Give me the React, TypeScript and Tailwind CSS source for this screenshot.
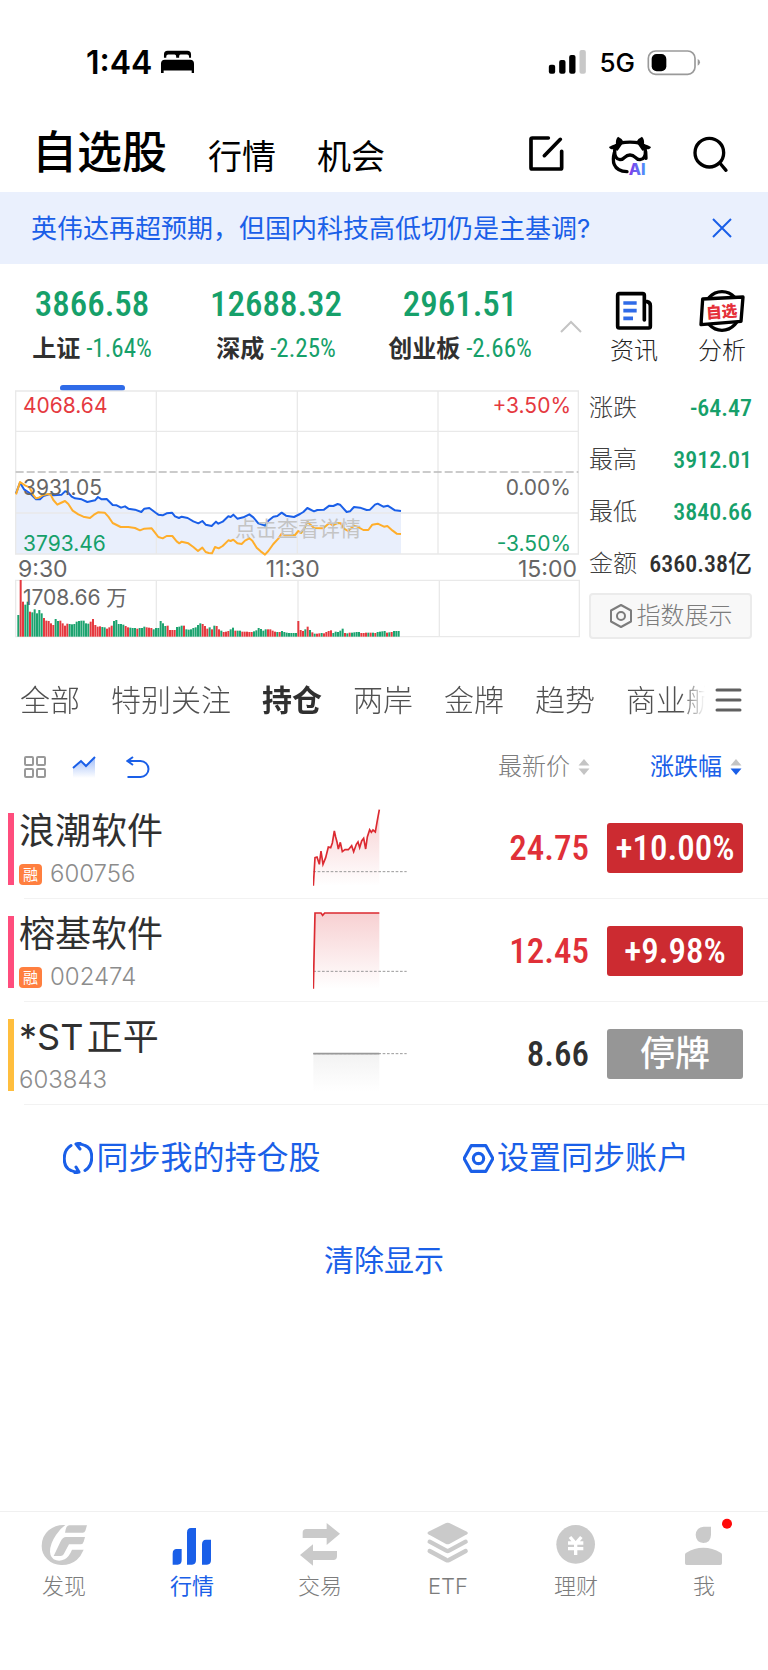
import type { ReactNode } from "react";

const INDEXES = [
  { name: "上证", value: "3866.58", pct: "-1.64%", active: true },
  { name: "深成", value: "12688.32", pct: "-2.25%", active: false },
  { name: "创业板", value: "2961.51", pct: "-2.66%", active: false },
];

const STATS = [
  { label: "涨跌", value: "-64.47", down: true },
  { label: "最高", value: "3912.01", down: true },
  { label: "最低", value: "3840.66", down: true },
  { label: "金额", value: "6360.38亿", down: false },
];

const GROUPS = ["全部", "特别关注", "持仓", "两岸", "金牌", "趋势", "商业航"];

const PRICE_LINE =
  "48,340 60,308 72,328 90,340 108,358 120,358 130,348 150,342 160,346 185,344 195,334 203,336 215,350 225,355 245,358 262,366 285,361 294,351 305,358 320,357 338,375 350,376 363,383 375,379 385,386 405,389 424,396 433,386 448,384 468,399 475,404 488,406 500,400 516,398 525,409 537,414 545,410 563,414 580,424 595,430 607,423 617,434 635,438 648,425 655,431 668,425 685,409 692,411 700,404 712,416 730,412 748,403 760,412 775,430 795,437 805,422 820,410 832,408 845,398 858,407 882,411 900,402 910,396 922,384 942,394 952,390 972,389 988,377 1000,378 1013,372 1020,374 1040,396 1050,394 1062,381 1080,383 1100,390 1110,389 1125,374 1133,371 1150,380 1163,377 1185,391 1203,393";

const AVERAGE_LINE =
  "48,343 60,306 75,316 88,322 100,345 108,355 118,352 130,345 145,342 152,344 160,360 172,374 182,369 195,363 205,372 218,392 235,403 250,410 270,414 282,404 294,397 314,398 325,410 338,429 350,435 362,441 385,441 405,444 420,451 433,446 455,445 465,458 475,471 488,475 500,468 517,468 530,484 538,490 545,485 565,490 580,501 594,513 607,503 617,516 626,519 636,520 645,501 656,505 668,498 685,481 692,483 700,479 712,490 725,492 735,482 748,475 757,482 770,503 782,514 795,524 805,513 820,492 835,476 845,461 855,466 885,465 895,453 903,459 912,448 922,425 930,433 942,444 970,445 988,429 998,436 1013,429 1022,430 1032,446 1044,453 1062,437 1072,440 1090,450 1105,450 1117,434 1133,431 1152,440 1162,438 1178,452 1190,461 1203,462";

// volume bars: positive is a rising minute (red), negative a falling one (green)
const VOLUMES = [
  -65, 170, 105, -96, -105, 75, -73, -82, -70, -80, -70, 56, 48, 47, 40, 35, -53, -47, 48, 40, 33,
  39, -38, -37, -38, -45, -47, -48, -48, -40, -39, 45, 53, 35, 30, 31, -29, -28, 24, 28, 33,
  -47, -50, -38, -38, -36, 32, 28, -27, -26, -26, 24, -26, -26, -30, 28, 27, 26, -22, -26, -26,
  -47, -40, -32, 33, 20, 20, 20, -29, -30, -33, 33, -22, -21, -22, -26, -28, -35, -40, 38, 32, 24,
  -28, 22, -33, 32, 22, -18, 14, 15, 17, -22, -27, 18, -18, -18, 15, 15, 15, 14, 14, -16, -19, -26,
  -23, -18, -22, 22, 22, 18, 15, -14, 14, -17, -14, -12, -11, -11, -11, -11, 47, 20, 17, -22, 30, -20,
  13, -9, 9, 10, -11, 10, 14, 17, 19, -11, -15, -14, -18, -24, 11, -10, 12, -12, -13, -14, -14,
  11, 11, 12, -12, 12, -12, 11, -14, -15, -16, -17, 12, -13, 14, -17, -17, -17,
];

const STOCKS = [
  {
    name: "浪潮软件",
    code: "600756",
    margin: true,
    price: "24.75",
    change: "+10.00%",
    bar: "bg-[#ff4d7d]",
    priceColor: "text-[#e03038]",
    badge: "bg-[#cc2b31]",
    stroke: "#dc2a31",
    base: 634,
    line: "941,676 946,592 952,590 959,612 964,572 970,612 978,592 986,560 993,562 998,548 1004,512 1008,530 1012,545 1016,566 1022,546 1028,574 1036,568 1046,568 1056,556 1062,574 1070,552 1075,545 1080,562 1086,542 1092,534 1098,566 1103,530 1110,508 1115,516 1120,509 1127,515 1133,480 1139,448",
  },
  {
    name: "榕基软件",
    code: "002474",
    margin: true,
    price: "12.45",
    change: "+9.98%",
    bar: "bg-[#ff4d7d]",
    priceColor: "text-[#e03038]",
    badge: "bg-[#cc2b31]",
    stroke: "#dc2a31",
    base: 624,
    line: "941,676 946,449 964,449 969,456 975,449 1139,449",
  },
  {
    name: "*ST\u200a正平",
    code: "603843",
    margin: false,
    price: "8.66",
    change: "停牌",
    bar: "bg-[#ffbe3d]",
    priceColor: "text-[#303030]",
    badge: "bg-[#969696]",
    stroke: "#999999",
    base: 562,
    line: "941,562 1139,562",
  },
];

const numFont = "font-['Roboto_Condensed',Roboto,'Noto_Sans_CJK_SC',sans-serif]";

function StatusBar() {
  return (
    <div className="flex h-[124px] items-center justify-between pl-[86px] pr-[67px]">
      <div className="flex items-center gap-2">
        <span className="pt-px text-[32px] font-semibold leading-8">1:44</span>
        <svg viewBox="480 150 106 78" className="h-[26px] w-[35px]">
          <path
            d="M492 176v-10q0-11 11-11h60q11 0 11 11v10h-6v-4q0-6-6-6h-20q-4 0-4 6v4h-9v-4q0-6-5-6h-19q-6 0-6 6v4z"
            fill="#000"
          />
          <path d="M483 222v-28q0-12 12-12h76q12 0 12 12v28h-7v-7h-85v7z" fill="#000" />
        </svg>
      </div>
      <div className="flex items-center gap-3">
        <svg viewBox="450 148 116 78" className="h-[26px] w-[39px]">
          <rect x="452" y="195" width="19" height="27" rx="6" />
          <rect x="483" y="181" width="19" height="41" rx="6" />
          <rect x="513" y="166" width="19" height="56" rx="6" />
          <rect x="544" y="151" width="19" height="71" rx="6" fill="#c8c8c8" />
        </svg>
        <span className="pt-px text-[26px] font-medium leading-8">5G</span>
        <svg viewBox="742 146 162 81" className="h-[27px] w-[54px]">
          <rect x="746" y="152" width="140" height="70" rx="22" fill="none" stroke="#9a9a9a" strokeWidth="5" />
          <rect x="756" y="161" width="44" height="52" rx="15" />
          <path d="M894 176q7 3 7 10t-7 10z" fill="#9a9a9a" />
        </svg>
      </div>
    </div>
  );
}

function Header() {
  return (
    <header className="flex h-[68px] items-start justify-between pl-8 pr-9">
      <nav className="flex items-baseline gap-[41px]">
        <a href="#watchlist" className="text-[45px] font-medium leading-[58px]">
          自选股
        </a>
        <a href="#market" className="text-[34px] leading-[56px]">
          行情
        </a>
        <a href="#chance" className="text-[34px] leading-[56px]">
          机会
        </a>
      </nav>
      <div className="flex gap-9 pt-[10px]">
        <button aria-label="编辑" className="h-11 w-11">
          <svg viewBox="384 402 132 132" fill="none" stroke="#000" strokeWidth="11" strokeLinecap="round" strokeLinejoin="round">
            <path d="M445 414H397q-4 0-4 4v85q0 4 4 4h84q4 0 4-4v-49M433 467l48-49" />
          </svg>
        </button>
        <button aria-label="AI助手" className="h-11 w-11">
          <svg viewBox="624 402 132 132">
            <defs>
              <linearGradient id="ai" x1="0" x2="1">
                <stop offset="0" stopColor="#8436e8" />
                <stop offset="1" stopColor="#4a94fb" />
              </linearGradient>
            </defs>
            <g fill="none" stroke="#000" strokeWidth="10" strokeLinecap="round" strokeLinejoin="round">
              <path d="M660 429q30-5 60 0 14 4 16 22 2 26-16 28-8 0-14-7-7-7-16-7t-16 7q-6 7-14 7-17-2-16-28 2-18 16-22z" />
              <path d="M643 458q-6 22 0 36 8 20 38 21" />
              <path d="M737 455l1 20" />
            </g>
            <path d="M648 432q-2-14 6-22 12 5 17 16l-18 26q-10-1-14-4-10 0-12-7 10-6 21-9zM732 432q2-14-6-22-12 5-17 16l18 26q10-1 14-4 10 0 12-7-10-6-21-9z" />
            <text x="686" y="524" fontSize="48" fontWeight="800" fontFamily="Inter, sans-serif" fill="url(#ai)">
              AI
            </text>
          </svg>
        </button>
        <button aria-label="搜索" className="h-11 w-11">
          <svg viewBox="864 402 132 132" fill="none" stroke="#000" strokeWidth="10" strokeLinecap="round">
            <circle cx="928" cy="458" r="43" />
            <path d="M962 492l16 19" />
          </svg>
        </button>
      </div>
    </header>
  );
}

function Shortcut({ label, children }: { label: string; children: ReactNode }) {
  return (
    <button className="flex w-12 flex-col items-center text-[24px] font-light leading-[38px] text-[#222]">
      {children}
      {label}
    </button>
  );
}

function IndexBar() {
  return (
    <section className="flex h-[126px] justify-between pr-[22px]">
      <div className="grid flex-1 grid-cols-3">
        {INDEXES.map((item) => (
          <button key={item.name} className="flex flex-col items-center pt-5">
            <span className={`${numFont} text-[35px] font-medium leading-[42px] text-[#16a06a]`}>{item.value}</span>
            <span className="flex items-center gap-[6px] pt-[3px] leading-[40px]">
              <span className="text-[24px] font-bold text-[#303030]">{item.name}</span>
              <span className={`${numFont} text-[25px] text-[#16a06a]`}>{item.pct}</span>
            </span>
            {item.active && <span className="mt-4 h-[6px] w-[65px] rounded-full bg-[#2f6be8]" />}
          </button>
        ))}
      </div>
      <button aria-label="收起" className="ml-2 mr-7 w-[22px]">
        <svg viewBox="0 0 22 14" fill="none" stroke="#c4c4c4" strokeWidth="2">
          <path d="M1 12L11 2l10 10" />
        </svg>
      </button>
      <div className="flex gap-10 pt-6">
        <Shortcut label="资讯">
          <svg viewBox="702 294 120 132" className="h-11 w-10 shrink-0" fill="none" stroke="#000" strokeWidth="11" strokeLinejoin="round">
            <path d="M793 390V316q0-5-5-5h-70q-5 0-5 5v93q0 5 5 5h88q5 0 5-5v-62q0-10-10-12" strokeLinecap="round" />
            <path d="M730 339h40M730 362h40M730 385h29" stroke="#2f6be8" />
          </svg>
        </Shortcut>
        <Shortcut label="分析">
          <svg viewBox="956 294 144 132" className="h-11 w-12 shrink-0">
            <ellipse cx="1028" cy="363" rx="54" ry="58" fill="#fff" stroke="#000" strokeWidth="10" />
            <path d="M970 327l121-6-6 73-120 10z" fill="#fff" stroke="#000" strokeWidth="10" strokeLinejoin="round" />
            <text
              x="980"
              y="382"
              fontSize="47"
              fontWeight="900"
              fontFamily="'Noto Sans CJK SC', sans-serif"
              fill="#e5303a"
              transform="rotate(-4 1028 363)"
            >
              自选
            </text>
          </svg>
        </Shortcut>
      </div>
    </section>
  );
}

function IndexChart() {
  return (
    <div className="relative flex-1 text-[21px] leading-[26px]">
      <svg viewBox="45 30 1695 744" className="block w-full">
        <polygon points={`${PRICE_LINE} 1203,522 48,522`} fill="#e9effc" />
        <g stroke="#e9e9e9" strokeWidth="4" fill="none">
          <path d="M47 33H1735V522H47zM47 154H1735M47 399H1735M469 33V522M892 33V522M1314 33V522" />
          <path d="M47 601H1738V770H47zM469 601V770M894 601V770M1318 601V770" />
        </g>
        <path d="M47 276H1735" stroke="#bbb" strokeWidth="4" strokeDasharray="24 9" />
        {VOLUMES.map((v, i) => (
          <rect
            key={i}
            x={52 + i * 7}
            y={770 - Math.abs(v)}
            width="6"
            height={Math.abs(v)}
            fill={v > 0 ? "#e5393f" : "#1ca36f"}
          />
        ))}
        <polyline points={PRICE_LINE} fill="none" stroke="#1a5fe8" strokeWidth="6" strokeLinejoin="round" />
        <polyline points={AVERAGE_LINE} fill="none" stroke="#ffae2b" strokeWidth="6" strokeLinejoin="round" />
      </svg>
      <span className="absolute left-2 top-[3px] text-[#e5393f]">4068.64</span>
      <span className="absolute right-[9px] top-[3px] text-[#e5393f]">+3.50%</span>
      <span className="absolute left-2 top-[85px] text-[#666]">3931.05</span>
      <span className="absolute right-[9px] top-[85px] text-[#666]">0.00%</span>
      <span className="absolute left-2 top-[141px] text-[#16a06a]">3793.46</span>
      <span className="absolute right-[9px] top-[141px] text-[#16a06a]">-3.50%</span>
      <span className="absolute left-[220px] top-[126px] text-[#c4c4c4]">点击查看详情</span>
      <div className="absolute inset-x-[3px] top-[166px] flex justify-between text-[23px] text-[#666]">
        <span>9:30</span>
        <span>11:30</span>
        <span>15:00</span>
      </div>
      <span className="absolute left-2 top-[195px] text-[#666]">1708.66 万</span>
    </div>
  );
}

function Stats() {
  return (
    <div className="w-[163px]">
      <dl>
        {STATS.map((s) => (
          <div key={s.label} className="flex h-[52px] items-start justify-between whitespace-nowrap leading-9">
            <dt className="text-[24px] font-light text-[#404040]">{s.label}</dt>
            <dd className={`${numFont} text-[24px] font-medium ${s.down ? "text-[#16a06a]" : "text-[#303030]"}`}>{s.value}</dd>
          </div>
        ))}
      </dl>
      <button className="mt-[-5px] flex h-[46px] w-full items-center justify-center gap-1 rounded border-2 border-[#ebebeb] bg-[#f8f8f8] text-[24px] font-light text-[#7c7c7c]">
        <svg viewBox="0 0 24 24" className="h-6 w-6" fill="none" stroke="currentColor" strokeWidth="2" strokeLinejoin="round">
          <path d="M12 1l10 5.500v11L12 23 2 17.500v-11z" />
          <circle cx="12" cy="12" r="4" />
        </svg>
        指数展示
      </button>
    </div>
  );
}

function GroupTabs() {
  return (
    <nav className="flex items-center pl-5 pr-[26px] pt-[39px] leading-[44px]">
      <div className="flex min-w-0 flex-1 gap-[31px] overflow-hidden whitespace-nowrap text-[30px] text-[#505050] [mask-image:linear-gradient(to_right,#000_calc(100%-24px),transparent)]">
        {GROUPS.map((g) => (
          <a key={g} href={`#${g}`} className={g === "持仓" ? "font-bold text-[#303030]" : "font-light"}>
            {g}
          </a>
        ))}
      </div>
      <button aria-label="更多分组" className="ml-[10px] w-[27px]">
        <svg viewBox="0 0 27 24" fill="none" stroke="#606060" strokeWidth="3" strokeLinecap="round">
          <path d="M2 2h23M2 12h23M2 22h23" />
        </svg>
      </button>
    </nav>
  );
}

function SortIcon({ down }: { down?: boolean }) {
  return (
    <svg viewBox="0 0 12 16" className="h-4 w-3">
      <path d="M6 0l5.500 6.500H.5z" fill="#c4c4c4" />
      <path d="M6 16L.5 9.500h11z" fill={down ? "#1a5fe8" : "#c4c4c4"} />
    </svg>
  );
}

function ListTools() {
  return (
    <div className="flex h-[74px] items-center justify-between pl-6 pr-[26px] pt-4 text-[24px]">
      <div className="flex items-center gap-[26px]">
        <button aria-label="宫格">
          <svg viewBox="0 0 22 22" className="w-[22px]" fill="none" stroke="#999" strokeWidth="2">
            <rect x="1" y="1" width="8" height="8" rx="1" />
            <rect x="13" y="1" width="8" height="8" rx="1" />
            <rect x="1" y="13" width="8" height="8" rx="1" />
            <rect x="13" y="13" width="8" height="8" rx="1" />
          </svg>
        </button>
        <button aria-label="走势图">
          <svg viewBox="0 0 24 22" className="w-6">
            <defs>
              <linearGradient id="area" x1="0" x2="0" y1="0" y2="1">
                <stop offset="0" stopColor="#9fbcf8" />
                <stop offset="1" stopColor="#fff" />
              </linearGradient>
            </defs>
            <path d="M1 12l8-7 5 5 9-9v21H1z" fill="url(#area)" />
            <path d="M1 12l8-7 5 5 9-9" fill="none" stroke="#1a5fe8" strokeWidth="2" />
          </svg>
        </button>
        <button aria-label="恢复">
          <svg viewBox="0 0 24 22" className="ml-1 w-6" fill="none" stroke="#1a5fe8" strokeWidth="2">
            <path d="M7 1L1.500 5 7 9M1.500 5h13a7.500 7.500 0 010 16H1.500" />
          </svg>
        </button>
      </div>
      <div className="flex gap-[60px] font-light">
        <button className="flex items-center gap-2 text-[#7c7c7c]">
          最新价 <SortIcon />
        </button>
        <button className="flex items-center gap-2 font-normal text-[#1a5fe8]">
          涨跌幅 <SortIcon down />
        </button>
      </div>
    </div>
  );
}

function StockRow({ stock }: { stock: (typeof STOCKS)[number] }) {
  const id = `fade-${stock.code}`;
  const halted = stock.change === "停牌";
  return (
    <li className="relative flex h-[103px] pl-2 after:absolute after:bottom-0 after:left-6 after:right-0 after:h-px after:bg-[#f2f2f2]">
      <span className={`mt-[17px] h-[72px] w-[6px] shrink-0 ${stock.bar}`} />
      <div className="w-[299px] pl-[5px] pt-3">
        <div className="text-[36px] leading-[46px] text-[#303030]">{stock.name}</div>
        <div className="flex items-center gap-2 pt-[5px] leading-[30px]">
          {stock.margin && (
            <span className="h-[21px] w-[23px] rounded-sm bg-[#ff7f3f] text-center text-[15px] leading-[21px] text-white">
              融
            </span>
          )}
          <span className="text-[24px] font-light text-[#8c8c8c]">{stock.code}</span>
        </div>
      </div>
      <svg viewBox="940 446 282 231" className="mt-[13px] h-[77px] w-[94px] shrink-0">
        <defs>
          <linearGradient id={id} gradientUnits="userSpaceOnUse" x1="0" x2="0" y1={halted ? 562 : 449} y2="677">
            <stop offset="0" stopColor={stock.stroke} stopOpacity={halted ? 0.12 : 0.22} />
            <stop offset="1" stopColor={stock.stroke} stopOpacity="0" />
          </linearGradient>
        </defs>
        <polygon points={`${stock.line} 1139,677 941,677`} fill={`url(#${id})`} />
        <path d={`M941 ${stock.base}H1221`} stroke="#999" strokeWidth="3" strokeDasharray="8 5" />
        <polyline points={stock.line} fill="none" stroke={stock.stroke} strokeWidth="5" />
      </svg>
      <div className="flex flex-1 items-center justify-end gap-[18px] pr-[25px]">
        <span className={`${numFont} pt-[3px] text-[35px] font-medium ${stock.priceColor}`}>{stock.price}</span>
        <span
          className={`${numFont} flex h-[50px] w-[136px] items-center justify-center rounded-[3px] pt-[3px] text-[35px] font-medium text-white ${stock.badge}`}
        >
          {stock.change}
        </span>
      </div>
    </li>
  );
}

function NavItem({ label, active, box, children }: { label: string; active?: boolean; box: string; children: ReactNode }) {
  return (
    <a
      href={`#${label}`}
      className={`flex flex-col items-center text-[22px] leading-8 ${active ? "text-[#1a5fe8]" : "font-light text-[#7c7c7c]"}`}
    >
      <svg viewBox={box} className={`mb-[2px] h-12 w-12 overflow-visible ${active ? "fill-[#1a5fe8]" : "fill-[#cacaca]"}`}>
        {children}
      </svg>
      {label}
    </a>
  );
}

function BottomNav() {
  return (
    <nav className="mt-auto grid grid-cols-6 border-t border-[#f0f0f0] pb-[68px] pt-2">
      <NavItem label="发现" box="120 60 144 144">
        <path d="M196 75q-28-2-50 16-21 18-21 47 0 24 17 40 18 18 44 17 26 0 44-15 13-12 21-31h-35q-8 20-22 29-14 7-25 3-18-6-19-26 0-24 18-50 13-20 28-30z" />
        <path d="M208 76h53l-5 16q-2 6-8 6h-53q3-22 13-22z" />
        <path d="M198 111h57l-4 14q-2 8-10 8h-34l-16 30q-3 5-9 5h-21l20-42q7-15 17-15z" />
      </NavItem>
      <NavItem label="行情" active box="504 60 144 144">
        <path d="M518 194v-33q0-14 12-14h15v33q0 14-12 14zM561 194V98q0-14 12-14h15v96q0 14-12 14zM606 194v-61q0-14 12-14h15v61q0 14-12 14z" />
      </NavItem>
      <NavItem label="交易" box="888 60 144 144">
        <path d="M908 114V98q0-11 11-11h61V69l40 32-40 34v-21zM1011 153v16q0 11-11 11h-61v17l-39-32 39-32v20z" />
      </NavItem>
      <NavItem label="ETF" box="120 60 144 144">
        <path d="M186 69q5-2 10 0l53 26q5 4 0 8l-53 29q-5 2-10 0l-53-29q-5-4 0-8z" />
        <path
          d="M137 125l50 27q4 2 8 0l50-27M137 153l50 27q4 2 8 0l50-27"
          fill="none"
          stroke="#cacaca"
          strokeWidth="13"
          strokeLinecap="round"
        />
      </NavItem>
      <NavItem label="理财" box="504 60 144 144">
        <circle cx="575" cy="133" r="58" />
        <path d="M558 111l17 20 17-20M575 129v36M552 129h46M552 146h46" fill="none" stroke="#fff" strokeWidth="10" />
      </NavItem>
      <NavItem label="我" box="888 60 144 144">
        <path d="M959 80h22v24q-1 25-23 25-22-2-23-25 2-22 24-24zM903 164q0-4 4-6 24-15 51-15t52 15q4 2 4 6v26q0 5-5 5H908q-5 0-5-5z" />
        <circle cx="1029" cy="71" r="15" fill="#ff0a0a" />
      </NavItem>
    </nav>
  );
}

export default function App() {
  return (
    <div className="flex min-h-screen flex-col bg-white font-[Inter,'Noto_Sans_CJK_SC',sans-serif] text-black">
      <StatusBar />
      <Header />
      <div className="flex h-[72px] items-center justify-between bg-[#eaf0fd] pl-[31px] pr-[35px] text-[26px] text-[#1a5fe8]">
        <a href="#news">英伟达再超预期，但国内科技高低切仍是主基调?</a>
        <button aria-label="关闭" className="w-[22px]">
          <svg viewBox="0 0 22 22" fill="none" stroke="#1a5fe8" strokeWidth="2">
            <path d="M2 2l18 18M20 2L2 20" />
          </svg>
        </button>
      </div>
      <IndexBar />
      <section className="flex gap-[9px] pl-[15px] pr-4">
        <IndexChart />
        <Stats />
      </section>
      <GroupTabs />
      <ListTools />
      <ul>
        {STOCKS.map((stock) => (
          <StockRow key={stock.code} stock={stock} />
        ))}
      </ul>
      <div className="grid grid-cols-2 pt-[29px] text-[32px] leading-[48px] text-[#1a5fe8]">
        <button className="flex items-center justify-center gap-[3px]">
          <svg viewBox="0 0 30 32" className="w-[30px]" fill="none" stroke="currentColor" strokeWidth="3" strokeLinecap="round" strokeLinejoin="round">
            <path d="M8 3.500C-1 9-1 25 8 28.500q4 2 8 1.500M13 25l3 5-4 1M22 28.500C31 23 31 7 22 3.500Q18 1.500 13 2M17 7l-4-5 4-1" />
          </svg>
          同步我的持仓股
        </button>
        <button className="flex items-center justify-center gap-[3px]">
          <svg viewBox="0 0 30 30" className="w-[31px]" fill="none" stroke="currentColor" strokeWidth="3" strokeLinejoin="round">
            <path d="M8 2.500h14L29 15l-7 12.500H8L1 15z" />
            <circle cx="15" cy="15" r="5" />
          </svg>
          设置同步账户
        </button>
      </div>
      <button className="mx-auto mt-14 text-[30px] leading-[44px] text-[#1a5fe8]">清除显示</button>
      <BottomNav />
    </div>
  );
}
